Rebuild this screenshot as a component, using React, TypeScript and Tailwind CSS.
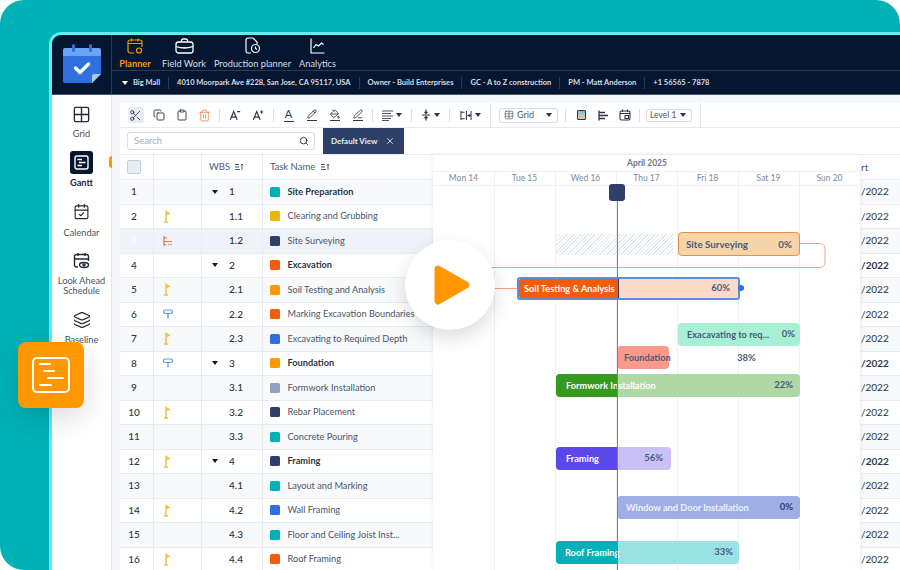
import {
  CalendarCheck,
  Clipboard,
  Copy,
  Grid2x2,
  Layers,
  PenLine,
  PaintBucket,
  Pencil,
  Scissors,
  Search,
  Table,
  Trash2,
  X,
} from 'lucide-react'

const rows = [
  { n: '1', wbs: '1', name: 'Site Preparation', color: 'bg-[#00b2b7]', group: true },
  { n: '2', wbs: '1.1', name: 'Clearing and Grubbing', color: 'bg-[#edb60f]', flag: 'yellow' },
  { n: '3', wbs: '1.2', name: 'Site Surveying', color: 'bg-[#2c4068]', flag: 'red', selected: true },
  { n: '4', wbs: '2', name: 'Excavation', color: 'bg-[#f25c0a]', group: true },
  { n: '5', wbs: '2.1', name: 'Soil Testing and Analysis', color: 'bg-[#ff9800]', flag: 'yellow' },
  { n: '6', wbs: '2.2', name: 'Marking Excavation Boundaries', color: 'bg-[#f25c0a]', flag: 'blue' },
  { n: '7', wbs: '2.3', name: 'Excavating to Required Depth', color: 'bg-[#2f6fe0]', flag: 'yellow' },
  { n: '8', wbs: '3', name: 'Foundation', color: 'bg-[#ff9800]', flag: 'blue', group: true },
  { n: '9', wbs: '3.1', name: 'Formwork Installation', color: 'bg-[#8aa2bb]' },
  { n: '10', wbs: '3.2', name: 'Rebar Placement', color: 'bg-[#2c4068]', flag: 'yellow' },
  { n: '11', wbs: '3.3', name: 'Concrete Pouring', color: 'bg-[#00b2b7]' },
  { n: '12', wbs: '4', name: 'Framing', color: 'bg-[#2c4068]', flag: 'yellow', group: true },
  { n: '13', wbs: '4.1', name: 'Layout and Marking', color: 'bg-[#00b2b7]' },
  { n: '14', wbs: '4.2', name: 'Wall Framing', color: 'bg-[#2f6fe0]', flag: 'yellow' },
  { n: '15', wbs: '4.3', name: 'Floor and Ceiling Joist Inst...', color: 'bg-[#00b2b7]' },
  { n: '16', wbs: '4.4', name: 'Roof Framing', color: 'bg-[#f25c0a]', flag: 'yellow' },
]

const days = ['Mon 14', 'Tue 15', 'Wed 16', 'Thu 17', 'Fri 18', 'Sat 19', 'Sun 20']

function Caret({ className = 'border-t-white' }: { className?: string }) {
  return <span className={`inline-block w-0 h-0 border-x-[3px] border-x-transparent border-t-[4px] ${className}`} />
}

function Flag({ kind }: { kind?: string }) {
  if (kind === 'yellow') {
    return (
      <svg width="12" height="13" viewBox="0 0 12 13" fill="none">
        <path d="M4 1V11.5M2.5 12H5.5" stroke="#f0c23c" strokeWidth="1.5" strokeLinecap="round" />
        <path d="M4.5 1L8.5 3.3L4.5 5.5Z" fill="#f0c23c" />
      </svg>
    )
  }
  if (kind === 'red') {
    return (
      <svg width="12" height="12" viewBox="0 0 12 12" fill="none" stroke="#e8734a" strokeWidth="1.2">
        <path d="M2 1V11M2 3H5M2 6.5H10M2 9.5H4M6 9.5H7.5M8.5 9.5H10" />
      </svg>
    )
  }
  if (kind === 'blue') {
    return (
      <svg width="12" height="10" viewBox="0 0 12 10" fill="none" stroke="#5b93ea" strokeWidth="1.2">
        <rect x="1.5" y="1" width="9" height="3.5" rx="1.75" />
        <path d="M6 4.5V9.5" />
      </svg>
    )
  }
  return null
}

function SortIcon() {
  return (
    <svg width="9" height="8" viewBox="0 0 9 8" fill="none" stroke="#4a5a78" strokeWidth="1">
      <path d="M0 1.5H4M0 4H4M0 6.5H5" />
      <path d="M7 7V1M5.8 2.2L7 1L8.2 2.2" />
    </svg>
  )
}

function FontSizeIcon({ plus }: { plus?: boolean }) {
  return (
    <svg width="12" height="12" viewBox="0 0 14 14" fill="none" stroke="#2b3547" strokeWidth="1.4">
      <path d="M1.5 12.5L5.5 3L9.5 12.5M3 9.5H8" />
      {plus ? <path d="M9.5 3.5H13M11.2 1.8V5.2" /> : <path d="M9.5 3H13" />}
    </svg>
  )
}

function Divider() {
  return <span className="w-px h-[13px] bg-[#d9dee5] shrink-0" />
}

function ToolBtn({ children }: { children: React.ReactNode }) {
  return <span className="w-[23px] h-[16px] flex items-center justify-center shrink-0">{children}</span>
}

function Toolbar() {
  return (
    <div className="h-[24px] w-[581px] shrink-0 bg-white border-r border-[#e3e7ec] flex items-center text-[#2b3547]">
      <span className="w-[4px]" />
      <ToolBtn>
        <span className="w-[16px] h-[16px] rounded-[2px] bg-[#e9edf3] flex items-center justify-center">
          <Scissors size={13} strokeWidth={1.6} />
        </span>
      </ToolBtn>
      <ToolBtn>
        <Copy size={12} strokeWidth={1.8} />
      </ToolBtn>
      <ToolBtn>
        <Clipboard size={12} strokeWidth={1.8} />
      </ToolBtn>
      <ToolBtn>
        <Trash2 size={13} strokeWidth={1.6} className="text-[#ef8a4f]" />
      </ToolBtn>
      <span className="w-[3px]" />
      <Divider />
      <span className="w-[3px]" />
      <ToolBtn>
        <FontSizeIcon />
      </ToolBtn>
      <ToolBtn>
        <FontSizeIcon plus />
      </ToolBtn>
      <span className="w-[4px]" />
      <Divider />
      <span className="w-[3px]" />
      <ToolBtn>
        <span className="flex flex-col items-center leading-none">
          <span className="text-[11px] leading-[10px]">A</span>
          <span className="w-[10px] h-px bg-[#2b3547] mt-[2px]" />
        </span>
      </ToolBtn>
      <ToolBtn>
        <span className="flex flex-col items-center">
          <Pencil size={10} strokeWidth={2} />
          <span className="w-[10px] h-px bg-[#2b3547] mt-[1px]" />
        </span>
      </ToolBtn>
      <ToolBtn>
        <span className="flex flex-col items-center">
          <PaintBucket size={10} strokeWidth={2} />
          <span className="w-[10px] h-px bg-[#2b3547] mt-[1px]" />
        </span>
      </ToolBtn>
      <ToolBtn>
        <span className="flex flex-col items-center">
          <PenLine size={10} strokeWidth={2} />
          <span className="w-[10px] h-px bg-[#2b3547] mt-[1px]" />
        </span>
      </ToolBtn>
      <span className="w-[3px]" />
      <Divider />
      <span className="w-[38px] flex items-center justify-center gap-[3px]">
        <svg width="11" height="11" viewBox="0 0 11 11" fill="none" stroke="#4a5568" strokeWidth="1.2">
          <path d="M0 1H11M0 3.5H9M0 6H11M0 8.5H9M0 10.5H7" />
        </svg>
        <Caret className="border-t-[#2b3547]" />
      </span>
      <Divider />
      <span className="w-[37px] flex items-center justify-center gap-[3px]">
        <svg width="10" height="12" viewBox="0 0 10 12" fill="none" stroke="#2b3547" strokeWidth="1.2">
          <path d="M1 6H9M5 0.5V4.5M3.5 3L5 4.5L6.5 3M5 11.5V7.5M3.5 9L5 7.5L6.5 9" />
        </svg>
        <Caret className="border-t-[#2b3547]" />
      </span>
      <Divider />
      <span className="w-[40px] flex items-center justify-center gap-[3px]">
        <svg width="12" height="11" viewBox="0 0 13 12" fill="none" stroke="#2b3547" strokeWidth="1.1">
          <path d="M1 1V11M12 1V11M7 1V11M1 2.5H5M1 9.5H5M8 6H11M9.5 4.5L11 6L9.5 7.5" />
        </svg>
        <Caret className="border-t-[#2b3547]" />
      </span>
      <span className="w-px h-full bg-[#e3e7ec]" />
      <span className="w-[8px]" />
      <span className="w-[59px] h-[15px] border border-[#d9dee5] rounded-[2px] flex items-center pl-[4px] pr-[5px] gap-[3px] text-[9px] text-[#4a5568]">
        <Table size={10} strokeWidth={1.6} />
        <span className="flex-1">Grid</span>
        <Caret className="border-t-[#2b3547]" />
      </span>
      <span className="w-[7px]" />
      <Divider />
      <span className="w-[4px]" />
      <span className="w-[22px] flex justify-center">
        <span className="w-[9px] h-[10px] rounded-[1px] border border-[#2b3547] bg-gradient-to-b from-[#6fc2ea] to-[#f2c48a]" />
      </span>
      <span className="w-[22px] flex justify-center">
        <svg width="11" height="11" viewBox="0 0 11 11" fill="none" stroke="#2b3547" strokeWidth="1.3">
          <path d="M1 0.5V10.5M1 2.5H7M1 5.5H10M1 8.5H7" />
        </svg>
      </span>
      <span className="w-[22px] flex justify-center">
        <svg width="12" height="12" viewBox="0 0 12 12" fill="none" stroke="#2b3547" strokeWidth="1.1">
          <rect x="1" y="2" width="10" height="9" rx="1.5" />
          <path d="M3.5 0.5V3M8.5 0.5V3M1 4.5H11M6 6.5H9.5V9.5H6Z" />
        </svg>
      </span>
      <span className="w-[3px]" />
      <Divider />
      <span className="w-[6px]" />
      <span className="w-[46px] h-[13px] border border-[#d9dee5] rounded-[2px] flex items-center justify-between pl-[3px] pr-[5px] text-[8.5px] text-[#4a5568]">
        Level 1
        <Caret className="border-t-[#2b3547]" />
      </span>
    </div>
  )
}

function TaskTable() {
  return (
    <div className="w-[313px] shrink-0 text-[#2b3547]">
      <div className="h-[26px] bg-white flex items-center border-y border-[#e8ecf1] text-[9.5px] text-[#4a5a78]">
        <div className="w-[34px] h-full flex items-center pl-[7px] border-r border-[#e8ecf1]">
          <span className="w-[14px] h-[14px] rounded-[2px] bg-[#e8eef5] border border-[#c3ccd8]" />
        </div>
        <div className="w-[48px] h-full border-r border-[#e8ecf1]" />
        <div className="w-[61px] h-full flex items-center gap-[5px] pl-[7px] border-r border-[#e8ecf1]">
          WBS <SortIcon />
        </div>
        <div className="flex-1 flex items-center gap-[6px] pl-[7px]">
          Task Name <SortIcon />
        </div>
      </div>
      {rows.map((r, i) => (
        <div
          key={r.n}
          className={`h-[24.5px] flex items-center border-b border-[#e8ecf1] text-[9.2px] ${
            r.selected ? 'bg-[#eff3f7]' : i % 2 === 0 ? 'bg-[#f7f9fb]' : 'bg-white'
          }`}
        >
          <div className={`w-[34px] h-full flex items-center justify-center pr-[5px] border-r border-[#e8ecf1] text-[10px] font-medium ${r.selected ? 'text-white' : ''}`}>
            {r.n}
          </div>
          <div className="w-[48px] h-full flex items-center pl-[8px] border-r border-[#e8ecf1]">
            <Flag kind={r.flag} />
          </div>
          <div className="w-[61px] h-full flex items-center border-r border-[#e8ecf1] text-[10px] font-medium">
            {r.group && <Caret className="ml-[10px] border-x-[3.5px] border-t-[#111827]" />}
            <span className={r.group ? 'ml-[11px]' : 'ml-[27px]'}>{r.wbs}</span>
          </div>
          <div className="flex-1 h-full flex items-center pl-[7px] gap-[7.5px] min-w-0">
            <span className={`w-[10px] h-[10px] rounded-[1.5px] shrink-0 ${r.color}`} />
            <span className={`whitespace-nowrap ${r.group ? 'font-bold' : 'text-[#4a5568]'}`}>{r.name}</span>
          </div>
        </div>
      ))}
    </div>
  )
}

function Gantt() {
  return (
    <div className="relative z-10 w-[428px] h-[416px] shrink-0 bg-white text-[9.2px] font-bold text-[#4a5a78] overflow-hidden shadow-[0_0_4px_rgba(0,0,0,0.08)]">
      <div className="h-[17px] pt-[1px] flex items-center justify-center border-t border-[#e8ecf1] text-[8.5px] text-[#6b7686]">
        April 2025
      </div>
      <div className="grid grid-cols-[repeat(7,61px)] h-[15px] items-center text-center border-y border-[#eef1f5] font-normal text-[8.5px] text-[#808a99]">
        {days.map((d) => (
          <span key={d}>{d}</span>
        ))}
      </div>
      <div className="absolute left-[1px] right-0 top-[16px] bottom-0 grid grid-cols-[repeat(7,61px)]">
        {days.map((d) => (
          <span key={d} className="border-r border-[#eef1f5]" />
        ))}
      </div>

      <svg className="absolute left-0 top-0" width="428" height="150" fill="none" stroke="#f3a27f" strokeWidth="1">
        <path d="M366 89.5H386Q392 89.5 392 95V108Q392 113.5 386 113.5H50" />
        <path d="M50 134.5H84" />
      </svg>

      <div className="absolute left-[123px] top-[80px] w-[117px] h-[21px] bg-[repeating-linear-gradient(135deg,#e3e7ee_0,#e3e7ee_1px,transparent_1px,transparent_2.5px)]" />

      <div className="absolute left-[245px] top-[78px] w-[122px] h-[24px] bg-[#f6d5a8] border-[1.5px] border-[#ee8c4c] rounded-[4px] flex items-center justify-between pl-[7px] pr-[7px] text-[9.8px]">
        <span>Site Surveying</span>
        <span>0%</span>
      </div>

      <div className="absolute left-[84px] top-[123px] w-[223px] h-[23px] bg-[#fdd9c8] border-2 border-[#5b8fdc] rounded-[3px] flex items-center justify-end pr-[8px]">
        <span className="text-[9.5px]">60%</span>
        <div className="absolute left-0 top-0 bottom-0 w-[100px] bg-[#f25c0a] rounded-l-[2px] border-r border-[#2c4068] flex items-center pl-[5px] text-white whitespace-nowrap">
          Soil Testing &amp; Analysis
        </div>
      </div>
      <span className="absolute left-[305px] top-[131px] w-[6px] h-[6px] rounded-full bg-[#2f6fe0]" />

      <div className="absolute left-[245px] top-[169px] w-[122px] h-[23px] bg-[#a8f0d4] rounded-[4px] flex items-center justify-between pl-[9px] pr-[5px]">
        <span>Exacavating to req...</span>
        <span className="text-[9.5px]">0%</span>
      </div>

      <div className="absolute left-[184px] top-[192px] w-[52px] h-[23px] bg-[#fb9a8a] rounded-[4px] flex items-center pl-[7px] whitespace-nowrap">
        Foundation
      </div>
      <span className="absolute left-[304px] top-[197px] text-[9.5px]">38%</span>

      <div className="absolute left-[123px] top-[220px] w-[244px] h-[23px] bg-[#b0d8a4] rounded-[4px] flex items-center justify-end pr-[7px]">
        <span className="text-[9.5px]">22%</span>
        <div className="absolute left-0 top-0 bottom-0 w-[61px] bg-[#379a1e] rounded-l-[4px]" />
        <span className="absolute left-[10px] text-white whitespace-nowrap">Formwork Installation</span>
      </div>

      <div className="absolute left-[123px] top-[293px] w-[115px] h-[23px] bg-[#c9c1f6] rounded-[4px] flex items-center justify-end pr-[8px]">
        <span className="text-[9.5px]">56%</span>
        <div className="absolute left-0 top-0 bottom-0 w-[61px] bg-[#5b48e8] rounded-l-[4px] flex items-center pl-[10px] text-white">
          Framing
        </div>
      </div>

      <div className="absolute left-[184px] top-[342px] w-[183px] h-[23px] bg-[#a0aee6] rounded-[4px] flex items-center justify-between pl-[9px] pr-[7px]">
        <span className="text-[#eef1fb]">Window and Door Installation</span>
        <span className="text-[9.5px] text-[#2c4068]">0%</span>
      </div>

      <div className="absolute left-[123px] top-[387px] w-[183px] h-[23px] bg-[#9be2e4] rounded-[4px] flex items-center justify-end pr-[6px]">
        <span className="text-[9.5px]">33%</span>
        <div className="absolute left-0 top-0 bottom-0 w-[61px] bg-[#00b2b7] rounded-l-[4px]" />
        <span className="absolute left-[9px] text-white whitespace-nowrap">Roof Framing</span>
      </div>

      <div className="absolute left-[184px] top-[46px] bottom-0 w-px bg-[#6a84b0]" />
      <div className="absolute left-[176px] top-[30px] w-[16px] h-[17px] rounded-[3px] bg-[#2c4068]" />
    </div>
  )
}

function DateColumn() {
  return (
    <div className="w-[39px] shrink-0 text-[10px] text-[#2b3547]">
      <div className="h-[26px] bg-white border-y border-[#e8ecf1] flex items-center text-[#4a5a78]">rt</div>
      {rows.map((r, i) => (
        <div
          key={r.n}
          className={`h-[24.5px] flex items-center border-b border-[#e8ecf1] ${i % 2 === 0 ? 'bg-[#f7f9fb]' : 'bg-white'} ${r.group && r.n !== '1' ? 'font-bold' : ''}`}
        >
          /2022
        </div>
      ))}
    </div>
  )
}

function Sidebar() {
  return (
    <div className="relative w-[60px] shrink-0 bg-white border-r border-[#e3e7ec] flex flex-col items-center text-[9.2px] text-[#4a5568] text-center leading-[10px]">
      <Grid2x2 size={19} strokeWidth={1.7} className="mt-[10px] shrink-0 text-[#1f2937]" />
      <span className="mt-[5px]">Grid</span>
      <span className="mt-[12px] w-[23px] h-[23px] shrink-0 rounded-[3px] bg-[#051630] flex items-center justify-center">
        <svg width="15" height="15" viewBox="0 0 15 15" fill="none" stroke="white" strokeWidth="1.4">
          <rect x="1" y="1" width="13" height="13" rx="2" />
          <path d="M3.5 4.5H8M5 7.5H11.5M3.5 10.5H8" />
        </svg>
      </span>
      <span className="mt-[4px] font-bold text-[#1f2937]">Gantt</span>
      <CalendarCheck size={17} strokeWidth={1.6} className="mt-[15px] shrink-0 text-[#1f2937]" />
      <span className="mt-[8px]">Calendar</span>
      <svg width="17" height="17" viewBox="0 0 17 17" fill="none" stroke="#1f2937" strokeWidth="1.4" className="mt-[14px] shrink-0">
        <path d="M5 1V4M12 1V4M1.5 7H15.5M5 15H3.5A2 2 0 0 1 1.5 13V4.5A2 2 0 0 1 3.5 2.5H13.5A2 2 0 0 1 15.5 4.5V9" />
        <ellipse cx="11" cy="13" rx="4.5" ry="2.5" />
        <circle cx="11" cy="13" r="1" />
      </svg>
      <span className="mt-[7px]">Look Ahead</span>
      <span>Schedule</span>
      <Layers size={18} strokeWidth={1.6} className="mt-[15px] shrink-0 text-[#1f2937]" />
      <span className="mt-[6px]">Baseline</span>
      <span className="absolute right-[-1px] top-[61px] w-[3px] h-[12px] rounded-l-[3px] bg-[#ff9800]" />
    </div>
  )
}

function Header() {
  const tabs = [
    { label: 'Field Work', w: 'w-[44px]', icon: (
      <svg width="19" height="16" viewBox="0 0 19 16" fill="none" stroke="white" strokeWidth="1.3">
        <rect x="1" y="4" width="17" height="11" rx="2.5" />
        <path d="M6.5 4V2.5A1.5 1.5 0 0 1 8 1H11A1.5 1.5 0 0 1 12.5 2.5V4M1 8.5Q9.5 11.5 18 8.5M9.5 9V10.5" />
      </svg>
    ) },
    { label: 'Production planner', w: 'w-[77px]', icon: (
      <svg width="16" height="17" viewBox="0 0 16 17" fill="none" stroke="white" strokeWidth="1.2">
        <path d="M6 16H3A2 2 0 0 1 1 14V3A2 2 0 0 1 3 1H8L12 5V7" />
        <circle cx="10.5" cy="11.5" r="4" />
        <path d="M10.5 9.5V11.5L12 12.5" />
      </svg>
    ) },
    { label: 'Analytics', w: 'w-[37px]', icon: (
      <svg width="15" height="16" viewBox="0 0 15 16" fill="none" stroke="white" strokeWidth="1.2">
        <path d="M1 0.5V15H14.5" />
        <path d="M3.5 10L6 6.5L8.5 8L11.5 5L13.5 6.5" />
      </svg>
    ) },
  ]
  const info = ['4010 Moorpark Ave #228, San Jose, CA 95117, USA', 'Owner - Build Enterprises', 'GC - A to Z construction', 'PM -  Matt Anderson', '+1 56565 - 7878']
  return (
    <div className="h-[60px] shrink-0 bg-[#051630] flex border-b border-[#4a5568]">
      <div className="w-[60px] shrink-0 border-r border-[#2a3a52] flex items-center justify-center pb-[2px]">
        <svg width="40" height="40" viewBox="0 0 40 40">
          <path d="M1 6A2 2 0 0 1 3 4H37A2 2 0 0 1 39 6V12H1Z" fill="#6aa5f5" />
          <path d="M1 12H39V30L30 39H3A2 2 0 0 1 1 37Z" fill="#2f6fe0" />
          <path d="M39 30L30 39V32A2 2 0 0 1 32 30Z" fill="#a9c9f7" />
          <rect x="10" y="0" width="3" height="8" rx="1.5" fill="#2f6fe0" />
          <rect x="27" y="0" width="3" height="8" rx="1.5" fill="#2f6fe0" />
          <path d="M13.5 24L18 28.5L26.5 20" fill="none" stroke="white" strokeWidth="3.4" strokeLinecap="round" strokeLinejoin="round" />
        </svg>
      </div>
      <div className="flex-1 flex flex-col">
        <div className="h-[36px] border-b border-[#2a3a52] flex items-start pl-[7px] gap-[8px] text-[9.2px] leading-[10px] text-[#d7dde6]">
          <div className="w-[32px] mr-[3px] flex flex-col items-center pt-[3px] text-[#ff9800] font-bold">
            <svg width="16" height="16" viewBox="0 0 16 16" fill="none" stroke="#ff9800" strokeWidth="1.2">
              <path d="M4.5 0.5V3.5M11 0.5V3.5M1 5.5H15M7 15H3A2 2 0 0 1 1 13V4A2 2 0 0 1 3 2H13A2 2 0 0 1 15 4V9" />
              <circle cx="12" cy="12.5" r="2.5" />
            </svg>
            <span className="mt-[5px] whitespace-nowrap">Planner</span>
          </div>
          {tabs.map((t) => (
            <div key={t.label} className={`${t.w} flex flex-col items-center pt-[2px] shrink-0`}>
              <span className="h-[17px] flex items-center">{t.icon}</span>
              <span className="mt-[5px] whitespace-nowrap">{t.label}</span>
            </div>
          ))}
        </div>
        <div className="flex-1 flex items-center pl-[10px] text-[7.5px] text-[#d7dde6] font-bold whitespace-nowrap">
          <Caret className="border-x-[3px] border-t-[4px] border-t-white mr-[5px]" />
          <span className="pr-[8px] border-r border-[#2a3a52] leading-[12px]">Big Mall</span>
          {info.map((t) => (
            <span key={t} className="px-[8px] border-r border-[#2a3a52] last:border-r-0 leading-[12px]">
              {t}
            </span>
          ))}
        </div>
      </div>
    </div>
  )
}

export default function App() {
  return (
    <div className="relative w-[900px] h-[570px] overflow-hidden bg-white [font-family:Lato,sans-serif]">
      <div className="h-full rounded-[24px] bg-[#00b2b7] pl-[49px] pt-[32px]">
        <div className="h-full rounded-tl-[12px] border-l-[3px] border-t-[3px] border-[#5eeef0] overflow-hidden flex flex-col">
          <Header />
          <div className="flex-1 flex min-h-0">
            <Sidebar />
            <div className="flex-1 bg-white flex flex-col min-w-0">
              <div className="h-[8px] shrink-0 bg-[#f5f7fa]" />
              <div className="flex-1 flex flex-col pl-[8px] bg-[#f5f7fa] min-h-0">
                <div className="bg-white flex-1 flex flex-col min-h-0">
                  <Toolbar />
                  <div className="h-[27px] shrink-0 flex items-center border-t border-[#e8ecf1]">
                    <div className="ml-[7px] w-[188px] h-[18px] border border-[#d9dee5] rounded-[3px] flex items-center justify-between pl-[6px] pr-[5px] text-[9.5px] text-[#a3aebb]">
                      Search
                      <Search size={10} strokeWidth={2} className="text-[#1f2937]" />
                    </div>
                    <div className="ml-[8px] w-[81px] h-full bg-[#2c4068] flex items-center justify-between pl-[8px] pr-[9px] text-[8px] font-bold text-[#e6ebf3]">
                      Default View
                      <X size={10} strokeWidth={2} />
                    </div>
                  </div>
                  <div className="flex shrink-0">
                    <TaskTable />
                    <Gantt />
                    <DateColumn />
                  </div>
                </div>
              </div>
            </div>
          </div>
        </div>
      </div>

      <div className="absolute z-20 left-[405px] top-[240px] w-[90px] h-[90px] rounded-full bg-white shadow-[0_8px_20px_rgba(0,0,0,0.14)] flex items-center justify-center">
        <svg width="36" height="40" viewBox="0 0 36 40" className="ml-[3px]">
          <path d="M4 4L32 20L4 36Z" fill="#ff9800" stroke="#ff9800" strokeWidth="7" strokeLinejoin="round" />
        </svg>
      </div>

      <div className="absolute z-20 left-[18px] top-[342px] w-[66px] h-[66px] rounded-[8px] bg-[#ff9800] shadow-[0_10px_30px_rgba(0,0,0,0.14)] flex items-center justify-center">
        <svg width="38" height="36" viewBox="0 0 38 36" fill="none" stroke="white" strokeWidth="2" strokeLinecap="round">
          <rect x="1" y="1" width="36" height="34" rx="4" />
          <path d="M8 7H18M12 14H22M16 21H31M8 28H19" />
        </svg>
      </div>
    </div>
  )
}
